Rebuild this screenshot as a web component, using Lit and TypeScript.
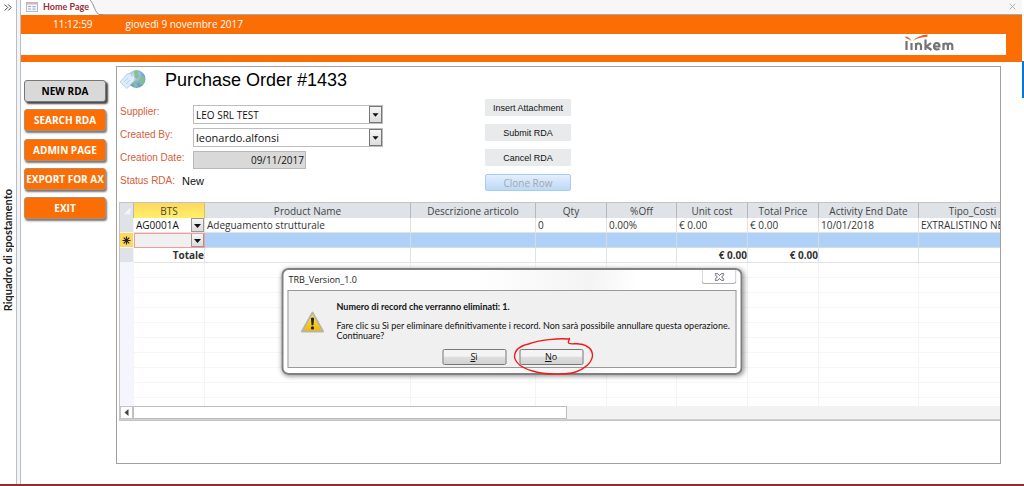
import { LitElement, html, css, nothing } from "lit";
import { customElement, property } from "lit/decorators.js";
import { classMap } from "lit/directives/class-map.js";

@customElement("drop-list")
class DropList extends LitElement {
  @property() label = "";
  @property() value = "";
  @property({ type: Boolean, reflect: true }) cell = false;
  @property({ type: Boolean, reflect: true }) compact = false;

  static styles = css`
    :host { display: block; }
    .wrap { display: grid; grid-template-columns: 1fr 13px; height: 19px; box-sizing: border-box; background: #fff; border: 1px solid #bdbdbd; }
    select {
      grid-column: 1 / 3; grid-row: 1; appearance: none; border: 0; margin: 0; padding: 0 14px 0 2px; width: 100%; min-width: 0;
      background: transparent; font: 11px/16px "Open Sans", sans-serif; color: #111; outline: 0; border-radius: 0;
    }
    .arrow { grid-column: 2; grid-row: 1; pointer-events: none; width: 13px; height: 100%; box-sizing: border-box; border: 1px solid #777; background: linear-gradient(#f6f6f6, #dcdcdc); }
    :host([compact]) select { font-size: 10px; }
    :host([cell]) .wrap { height: 14px; border: 0; background: transparent; grid-template-columns: 1fr 13px; }
    :host([cell]) select { font-size: 10px; line-height: 14px; }
    :host([cell]) .arrow { border-color: #999; }
  `;

  render() {
    return html`<div class="wrap">
      <select aria-label=${this.label}><option>${this.value}</option></select>
      <svg class="arrow" viewBox=${this.cell ? "0 2 11 12" : "0 0 11 17"} aria-hidden="true"><path d="M2 7h7l-3.500 4z" fill="#111" /></svg>
    </div>`;
  }
}

interface Column { name: string; width: number; }

const COLUMNS: Column[] = [
  { name: "BTS", width: 71 },
  { name: "Product Name", width: 206 },
  { name: "Descrizione articolo", width: 125 },
  { name: "Qty", width: 71 },
  { name: "%Off", width: 70 },
  { name: "Unit cost", width: 71 },
  { name: "Total Price", width: 71 },
  { name: "Activity End Date", width: 100 },
  { name: "Tipo_Costi", width: 108 },
];

@customElement("order-grid")
class OrderGrid extends LitElement {
  static styles = css`
    :host { display: block; border: 1px solid #c4c4c4; border-right: 0; overflow: hidden; font: 10px/14px "Open Sans", sans-serif; color: #333; }
    .view { overflow: hidden; max-height: 203px; }
    table { border-collapse: separate; border-spacing: 0; table-layout: fixed; width: 907px; }
    th, td { height: 15px; box-sizing: border-box; padding: 0 2px; white-space: nowrap; overflow: hidden; border-right: 1px solid #f4f4f4; border-bottom: 1px solid #f6f6f6; text-align: left; font-weight: 400; }
    thead th { background: #dfe3e8; border-right-color: #b4b8bd; border-bottom: 0; text-align: center; color: #444; }
    thead th.active { background: linear-gradient(#ffd75e, #fff06b); border-color: #d8c069; }
    th.row { background: #f5f6fd; padding: 0; }
    .filled th.row, thead th.row { background: #dfe3e8; }
    .filled td { border-color: #e2e2e2; }
    .new td { background: #afd1f7; border-color: #d3dce6; }
    .new th.row { background: #ffd75e; text-align: center; }
    .new td.edit { background: #f0f0f0; outline: 1px solid #f79a9a; outline-offset: -1px; }
    td.drop { padding: 0; }
    .total td { font-weight: 700; text-align: right; padding-right: 0; }
    th svg { display: block; margin: 0 auto; }
    .bar { display: flex; height: 13px; background: #f2f2f2; border-bottom: 1px solid #d0d0d0; }
    .back { width: 13px; box-sizing: border-box; padding: 0; border: 1px solid #c4c4c4; background: #fff; display: grid; place-items: center; }
    .thumb { width: 434px; background: #fff; border: 1px solid #bdbdbd; box-sizing: border-box; }
  `;

  render() {
    const blank = Array.from({ length: 10 });
    return html`
      <div class="view">
        <table>
          <colgroup><col style="width:14px" />${COLUMNS.map((c) => html`<col style="width:${c.width}px" />`)}</colgroup>
          <thead>
            <tr>
              <th class="row"><svg width="9" height="9" viewBox="0 0 9 9"><path d="M9 0v9H0z" fill="#f2f5f8" stroke="#c9d0d8" stroke-width=".6" /></svg></th>
              ${COLUMNS.map((c, i) => html`<th scope="col" class=${classMap({ active: i === 0 })}>${c.name}</th>`)}
            </tr>
          </thead>
          <tbody>
            <tr class="filled">
              <th class="row"></th>
              <td class="drop"><drop-list cell label="BTS" value="AG0001A"></drop-list></td>
              <td>Adeguamento strutturale</td><td></td><td>0</td><td>0.00%</td><td>€ 0.00</td><td>€ 0.00</td><td>10/01/2018</td><td>EXTRALISTINO NE</td>
            </tr>
            <tr class="new">
              <th class="row"><svg width="9" height="9" viewBox="0 0 9 9" stroke="#222" stroke-width="1.2"><path d="M4.5 .5v8M.5 4.5h8M1.7 1.7l5.6 5.6M7.3 1.7l-5.6 5.6" /></svg></th>
              <td class="drop edit"><drop-list cell label="BTS"></drop-list></td>
              ${COLUMNS.slice(1).map(() => html`<td></td>`)}
            </tr>
            <tr class="filled total">
              <th class="row"></th><td>Totale</td><td></td><td></td><td></td><td></td><td>€ 0.00</td><td>€ 0.00</td><td></td><td></td>
            </tr>
            ${blank.map(() => html`<tr><th class="row"></th>${COLUMNS.map(() => html`<td></td>`)}</tr>`)}
          </tbody>
        </table>
      </div>
      <div class="bar">
        <button class="back" aria-label="Scroll left"><svg width="5" height="7" viewBox="0 0 5 7"><path d="M4.5 0v7L.5 3.5z" fill="#444" /></svg></button>
        <div class="thumb"></div>
      </div>`;
  }
}

@customElement("confirm-box")
class ConfirmBox extends LitElement {
  static styles = css`
    :host { display: block; }
    .frame { box-sizing: border-box; border: 2px solid #808080; border-radius: 7px; background: linear-gradient(100deg, #fff 40%, #f4f4f4 65%, #fff 75%); padding: 0 4px 5px; box-shadow: 1px 1px 5px #0007; font: 9px/10px "Open Sans", sans-serif; color: #1a1a1a; }
    .title { display: flex; justify-content: space-between; align-items: flex-start; height: 20px; padding-left: 1px; }
    .title span { padding-top: 5px; }
    .close { width: 35px; height: 14px; padding: 0; border: 1px solid #b0b0b0; border-top: 0; border-radius: 0 0 3px 3px; background: #fff; display: grid; place-items: center; }
    .body { border: 1px solid #999; background: #f0f0f0; display: grid; grid-template-columns: 24px 1fr; align-content: start; gap: 8px 12px; height: 78px; box-sizing: border-box; padding: 11px 0 0 12px; }
    .warn { margin-top: 9px; }
    .text { font: 9px/10px Lato, sans-serif; white-space: nowrap; color: #111; }
    p { margin: 0; }
    .head { font-weight: 700; margin-bottom: 9px; }
    .actions { grid-column: 1 / 3; display: flex; gap: 13px; justify-content: center; padding-right: 11px; }
    .slot { position: relative; }
    .actions button { display: block; width: 64px; height: 16px; padding: 0; border: 1px solid #777; border-radius: 2px; background: linear-gradient(#f4f4f4 45%, #dedede 50%, #d2d2d2); font: inherit; color: #111; }
    .ring { position: absolute; left: -6px; top: -12px; pointer-events: none; overflow: visible; }
  `;

  render() {
    return html`<div class="frame" role="alertdialog" aria-label="TRB_Version_1.0">
      <div class="title">
        <span>TRB_Version_1.0</span>
        <button class="close" aria-label="Close"><svg width="10" height="8" viewBox="0 0 10 8"><path d="M.7 .7h2.6L5 2.5 6.7.7h2.6v1.1L7.2 4l2.1 2.2v1.1H6.7L5 5.5 3.3 7.3H.7V6.2L2.8 4 .7 1.8z" fill="#fff" stroke="#555b6e" stroke-width=".9" /></svg></button>
      </div>
      <div class="body">
        <svg class="warn" width="24" height="22" viewBox="0 0 24 22">
          <defs><linearGradient id="g" x2="0" y2="1"><stop stop-color="#ffe94a" /><stop offset="1" stop-color="#f3b500" /></linearGradient></defs>
          <path d="M12 1.5 22.7 20.5H1.3z" fill="url(#g)" stroke="#b5b5ad" stroke-width="1.8" stroke-linejoin="round" />
          <path d="M10.4 7.2q1.6-1.4 3.2 0l-.7 7h-1.8z" fill="#222" /><circle cx="12" cy="16.9" r="1.6" fill="#222" />
        </svg>
        <div class="text">
          <p class="head">Numero di record che verranno eliminati: 1.</p>
          <p>Fare clic su Sì per eliminare definitivamente i record. Non sarà possibile annullare questa operazione.</p>
          <p>Continuare?</p>
        </div>
        <div class="actions">
          <div class="slot"><button><u>S</u>ì</button></div>
          <div class="slot">
            <button><u>N</u>o</button>
            <svg class="ring" width="84" height="40" viewBox="0 0 84 40" fill="none" stroke="#f01818" stroke-width="1.4" stroke-linecap="round" stroke-linejoin="round"><path d="M55.500 2C45 1 26 3 15 7 6 9 1 14 1 20c1 6 8 11 18 14 12 4 34 4 43 1 9-3 16-9 17-16 0-8-6-11-13-12-4-1-8 1-11-1-1-1 1-3 1-4.500" /></svg>
          </div>
        </div>
      </div>
    </div>`;
  }
}

@customElement("app-root")
class AppRoot extends LitElement {
  static styles = css`
    :host { display: block; font: 10px/14px "Open Sans", sans-serif; color: #111; }
    .app { position: relative; box-sizing: border-box; min-height: 100vh; display: grid; grid-template-columns: 16px 5px minmax(0, 1fr) 2px; background: #fff; border-bottom: 2px solid #8f2d33; overflow: hidden; }
    .pane { display: flex; flex-direction: column; align-items: center; }
    .expand { border: 0; padding: 0; margin-top: 3px; background: none; display: block; width: 12px; height: 8px; }
    .expand svg { display: block; margin: 0 auto; }
    .pane span { writing-mode: vertical-rl; transform: rotate(180deg); font: 700 11px/14px Lato, sans-serif; color: #222; margin-top: 178px; white-space: nowrap; }
    .split { background: #f3f4f7; border: solid #b9bec6; border-width: 0 1px; box-sizing: border-box; }
    .edge { padding-top: 61px; }
    .edge i { display: block; height: 37px; background: #0a78d6; }
    .tabs { height: 15px; background: #f7f7f7; border-bottom: 1px solid #a9a9a9; box-sizing: border-box; display: flex; justify-content: space-between; }
    .tab { display: grid; grid-template-columns: 82px; height: 15px; }
    .tab > svg { grid-area: 1 / 1; }
    .tab a { grid-area: 1 / 1; display: flex; align-items: center; gap: 5px; padding-left: 5px; height: 13px; color: #9b2d36; font: 700 9px/13px Lato, sans-serif; text-decoration: none; white-space: nowrap; }
    .shut { border: 0; background: none; padding: 0 6px 0 0; height: 12px; display: grid; place-items: center; }
    .banner { background: #fa6e05; padding: 0 16px 7px 0; }
    .when { display: flex; gap: 33px; height: 19px; line-height: 18px; padding-left: 32px; color: #fff; }
    .brand { height: 21px; background: #fff; display: flex; justify-content: flex-end; padding-right: 52px; }
    .work { display: grid; grid-template-columns: 82px minmax(0, 1fr); column-gap: 10px; padding: 4px 21px 20px 3px; }
    nav { display: flex; flex-direction: column; justify-content: space-between; height: 139px; margin-top: 14px; }
    nav button { height: 22px; padding: 0; border: 1px solid #b98b68; border-radius: 3px; background: #fa6e05; color: #fff; font: 700 10px/14px "Open Sans", sans-serif; box-shadow: 1px 2px 2px #0008; white-space: nowrap; }
    nav button.on { background: #d9d9d9; color: #000; border-color: #777; box-shadow: 2px 2px 2px #000b; }
    main { border: 1px solid #a3a09c; box-sizing: border-box; height: 398px; padding: 1px 0 0 2px; }
    header { display: flex; align-items: center; gap: 19px; height: 24px; }
    h1 { margin: 0; font: 18px/24px "Liberation Sans", sans-serif; color: #000; }
    .top { display: flex; gap: 102px; height: 110px; padding-left: 1px; }
    .form { display: grid; grid-template-columns: 73px 190px; grid-auto-rows: 19px; row-gap: 4px; padding-top: 13px; }
    .form label, .form .lab { font: 10px/14px "Liberation Sans", sans-serif; color: #d4603a; }
    .date { width: 113px; height: 18px; box-sizing: border-box; border: 1px solid #b8b8b8; background: #d9d9d9; font: 10px/16px "Open Sans", sans-serif; color: #111; text-align: right; padding: 0 1px; }
    .status { grid-column: 1 / 3; display: flex; gap: 7px; }
    output { font: 11px/15px "Liberation Sans", sans-serif; }
    .acts { display: flex; flex-direction: column; gap: 8px; padding-top: 7px; }
    .acts button { width: 86px; height: 17px; padding: 0; border: 0; background: #e8eaec; font: 9px/14px "Liberation Sans", sans-serif; color: #111; }
    .acts button:disabled { border: 1px solid #a9cdf0; border-radius: 2px; background: linear-gradient(#e3effc, #bcd9f8); color: #a3a7ab; font: 10px/14px "Open Sans", sans-serif; }
    .over { position: absolute; top: 268px; left: 50%; width: 461px; transform: translateX(-50%); }
  `;

  render() {
    const nav = ["NEW RDA", "SEARCH RDA", "ADMIN PAGE", "EXPORT FOR AX", "EXIT"];
    return html`<div class="app">
      <aside class="pane">
        <button class="expand" aria-label="Espandi"><svg width="8" height="7" viewBox="0 0 8 7" fill="none" stroke="#444"><path d="M.7 .5l3 3-3 3M4.2 .5l3 3-3 3" /></svg></button>
        <span>Riquadro di spostamento</span>
      </aside>
      <div class="split"></div>
      <div>
        <div class="tabs">
          <div class="tab">
            <svg width="82" height="15" viewBox="0 0 82 15"><path d="M0 0H69C73 3 74 14.500 79 14.500H82V15H0z" fill="#fff" /><path d="M69 0C73 3 74 14.500 79 14.500H82" fill="none" stroke="#8f8f8f" /></svg>
            <a href="#home">
              <svg width="12" height="10" viewBox="0 0 12 10"><rect x=".5" y=".5" width="11" height="9" fill="#f4f6fb" stroke="#b3bbcc" /><path d="M1 1h10v1.500H1z" fill="#eeb0ae" /><path d="M2 4.500h3M2 7h3" stroke="#9aa7c4" /><path d="M6.500 4h3v1.200h-3zM6.500 6.500h3v1.200h-3z" fill="#9dadd2" /></svg>
              Home Page
            </a>
          </div>
          <button class="shut" aria-label="Chiudi"><svg width="7" height="7" viewBox="0 0 7 7" stroke="#b0b0b0"><path d="M.7 .7l5.600 5.600M6.300 .7L.7 6.300" /></svg></button>
        </div>
        <div class="banner">
          <div class="when"><time>11:12:59</time><span>giovedì 9 novembre 2017</span></div>
          <div class="brand">
            <svg width="49" height="18" viewBox="0 0 49 18" role="img" aria-label="linkem">
              <g fill="none" stroke="#747474" stroke-width="2.200">
                <path d="M1.500 7v9M6.500 9v7M11 16V9M11 12q0-2.500 2.500-2.500T16 12v4M20.500 5.500V16M26 9l-4.500 3.500L26.500 16M29 12.500h5.500q0-3.500-2.700-3.500T29 12.500q0 3 3 3 1.500 0 2.500-.6M38.500 16V9M38.500 12q0-2.500 2.200-2.500t2.200 2.500v4M42.900 12q0-2.500 2.200-2.500t2.200 2.500v4" />
              </g>
              <path d="M.5 2.200Q5 3.500 6.500 7 4 4.800.500 4zM8 7Q12 1.500 22.500 .5v2.200Q13 3 8 7z" fill="#ee5a24" />
            </svg>
          </div>
        </div>
        <div class="work">
          <nav>${nav.map((n, i) => html`<button class=${i === 0 ? "on" : nothing}>${n}</button>`)}</nav>
          <main>
            <header>
              <svg width="27" height="22" viewBox="0 0 27 22">
                <defs><radialGradient id="o" cx=".4" cy=".3"><stop stop-color="#d8ebfb" /><stop offset="1" stop-color="#6d9fd2" /></radialGradient></defs>
                <circle cx="17.500" cy="10" r="9" fill="url(#o)" />
                <path d="M15 2q3-1.500 5 0l-1 3 2 2-3 3-3-2zM21 9l4-2 1 4-3 5-3-2zM13 12l4 1 2 4-3 1.500z" fill="#87c08a" />
                <path d="M1 13 8 5l7-1 1 7-8 8.500z" fill="#dcecf8" stroke="#a8c6df" stroke-width=".8" />
                <circle cx="13.300" cy="6.200" r="1" fill="#fff" stroke="#88a9c6" stroke-width=".6" /><path d="M5 13l4-4M7 15l4-4" stroke="#b9d3e8" />
              </svg>
              <h1>Purchase Order #1433</h1>
            </header>
            <div class="top">
              <div class="form">
                <span class="lab">Supplier:</span><drop-list compact label="Supplier" value="LEO SRL TEST"></drop-list>
                <span class="lab">Created By:</span><drop-list label="Created By" value="leonardo.alfonsi"></drop-list>
                <label for="date">Creation Date:</label><input id="date" class="date" value="09/11/2017" readonly />
                <div class="status"><label for="st">Status RDA:</label><output id="st">New</output></div>
              </div>
              <div class="acts">
                <button>Insert Attachment</button><button>Submit RDA</button><button>Cancel RDA</button><button disabled>Clone Row</button>
              </div>
            </div>
            <order-grid></order-grid>
          </main>
        </div>
      </div>
      <div class="edge"><i></i></div>
      <confirm-box class="over"></confirm-box>
    </div>`;
  }
}
